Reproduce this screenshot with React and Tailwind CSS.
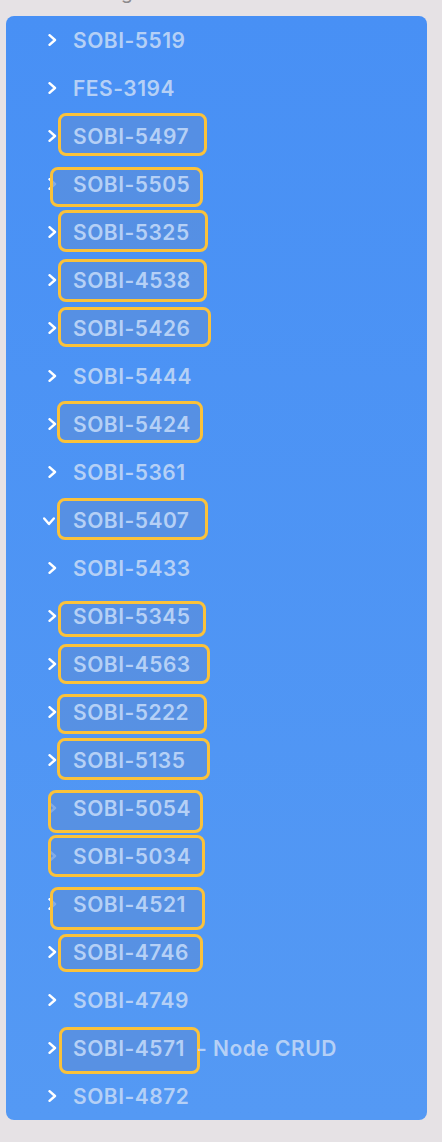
import React from "react";

const rows = [
  "SOBI-5519","FES-3194","SOBI-5497","SOBI-5505","SOBI-5325","SOBI-4538","SOBI-5426","SOBI-5444",
  "SOBI-5424","SOBI-5361","SOBI-5407","SOBI-5433","SOBI-5345","SOBI-4563","SOBI-5222","SOBI-5135",
  "SOBI-5054","SOBI-5034","SOBI-4521","SOBI-4746","SOBI-4749","SOBI-4571","SOBI-4872",
];

// page coordinates: [x1, y1, x2, y2]
const boxes = [
  [58, 113, 207, 156],
  [50, 167, 203, 207],
  [58, 210, 208, 252],
  [58, 259, 207, 302],
  [58, 307, 211, 347],
  [57, 401, 203, 443],
  [57, 498, 208, 540],
  [58, 601, 206, 637],
  [58, 644, 210, 684],
  [57, 694, 207, 734],
  [57, 738, 210, 780],
  [48, 790, 203, 833],
  [48, 835, 205, 877],
  [50, 887, 205, 930],
  [58, 934, 203, 972],
  [59, 1027, 200, 1074],
];

function ChevronRight() {
  return (
    <svg width="9" height="12" viewBox="0 0 9 12" fill="none">
      <polyline points="1.5,1.2 7,6 1.5,10.8" stroke="white" strokeWidth="2.4" strokeLinecap="round" strokeLinejoin="round" />
    </svg>
  );
}

function ChevronDown() {
  return (
    <svg width="12" height="9" viewBox="0 0 12 9" fill="none" className="-ml-[5px] mt-[2px]">
      <polyline points="1.2,1.5 6,7 10.8,1.5" stroke="white" strokeWidth="2.4" strokeLinecap="round" strokeLinejoin="round" />
    </svg>
  );
}

export default function App() {
  return (
    <div className="min-h-[1142px] w-[442px] bg-[#e6e2e5]" style={{ fontFamily: "Inter, 'Noto Sans', sans-serif" }}>
      <div className="h-[16px] overflow-hidden">
        <div className="-mt-[17px] pl-[60px] text-[19px] leading-[20px] text-[#8c8a8c]">Filtering</div>
      </div>
      <div className="relative ml-[6px] w-[421px] rounded-[8px] bg-gradient-to-b from-[#4890f5] to-[#5499f4]">
        {boxes.map(([x1, y1, x2, y2], k) => (
          <div
            key={k}
            className="absolute z-10 rounded-[8px] border-[3.5px] border-[#fbc23a] bg-[#5a8fdd]/75"
            style={{ left: x1 - 6, top: y1 - 16, width: x2 - x1, height: y2 - y1 }}
          />
        ))}
        {rows.map((r, i) => (
          <div key={r} className="flex h-[48px] items-center pl-[42px]">
            <div className="flex w-[9px] items-center">
              {i === 10 ? <ChevronDown /> : <ChevronRight />}
            </div>
            <span className="relative z-20 ml-[16px] text-[21px] font-semibold leading-none tracking-[0.5px] text-[#b5d0f6]">
              {r}
              {i === 21 ? <span className="ml-[12px]">- Node CRUD</span> : null}
            </span>
          </div>
        ))}
      </div>
    </div>
  );
}
